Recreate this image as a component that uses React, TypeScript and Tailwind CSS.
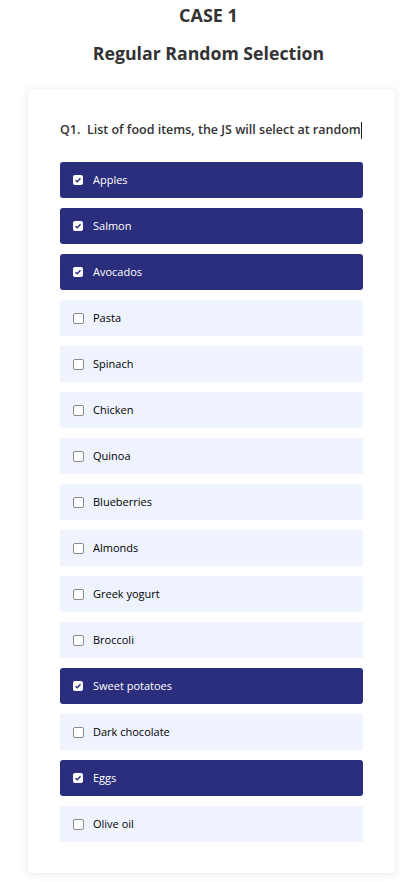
import React from 'react';

const items: { name: string; picked: boolean }[] = [
  { name: 'Apples', picked: true },
  { name: 'Salmon', picked: true },
  { name: 'Avocados', picked: true },
  { name: 'Pasta', picked: false },
  { name: 'Spinach', picked: false },
  { name: 'Chicken', picked: false },
  { name: 'Quinoa', picked: false },
  { name: 'Blueberries', picked: false },
  { name: 'Almonds', picked: false },
  { name: 'Greek yogurt', picked: false },
  { name: 'Broccoli', picked: false },
  { name: 'Sweet potatoes', picked: true },
  { name: 'Dark chocolate', picked: false },
  { name: 'Eggs', picked: true },
  { name: 'Olive oil', picked: false },
];

const CheckBox = ({ on }: { on: boolean }) =>
  on ? (
    <span className="w-[10px] h-[10px] rounded-[2px] bg-white flex items-center justify-center shrink-0">
      <svg width="8" height="8" viewBox="0 0 8 8">
        <path d="M1.5 4.2 L3.2 5.8 L6.5 2.3" fill="none" stroke="#2b2e7c" strokeWidth="1.4" />
      </svg>
    </span>
  ) : (
    <span className="w-[11px] h-[11px] rounded-[2px] border border-[#8a8a8a] bg-white shrink-0" />
  );

export default function App() {
  return (
    <div className="w-[417px] min-h-[882px] bg-white text-[#333] pb-2" style={{ fontFamily: '"Open Sans", "Noto Sans", sans-serif' }}>
      <h1 className="text-center font-bold text-[18px] leading-[24px] pt-[3px]">CASE 1</h1>
      <h2 className="text-center font-bold text-[17.7px] leading-[24px] mt-[14px]">Regular Random Selection</h2>
      <div className="mx-[28px] w-[367px] mt-[24px] bg-white rounded-[4px] shadow-[0_1px_8px_rgba(0,0,0,0.10)] px-[32px] pt-[32px] pb-[31px]">
        <p className="text-[12.5px] font-semibold leading-[18px] whitespace-pre flex items-center">
          {'Q1.  List of food items, the JS will select at random'}
          <span className="inline-block w-px h-[17px] bg-[#222]" />
        </p>
        <div className="mt-[23px] flex flex-col gap-[10px]">
          {items.map((it) => (
            <div
              key={it.name}
              className={`h-[36px] rounded-[3px] flex items-center gap-[10px] pl-[13px] text-[11px] ${
                it.picked ? 'bg-[#2b2e7c] text-white' : 'bg-[#eef3fe] text-black'
              }`}
            >
              <CheckBox on={it.picked} />
              <span className={it.picked ? '' : '-ml-px'}>{it.name}</span>
            </div>
          ))}
        </div>
      </div>
    </div>
  );
}
